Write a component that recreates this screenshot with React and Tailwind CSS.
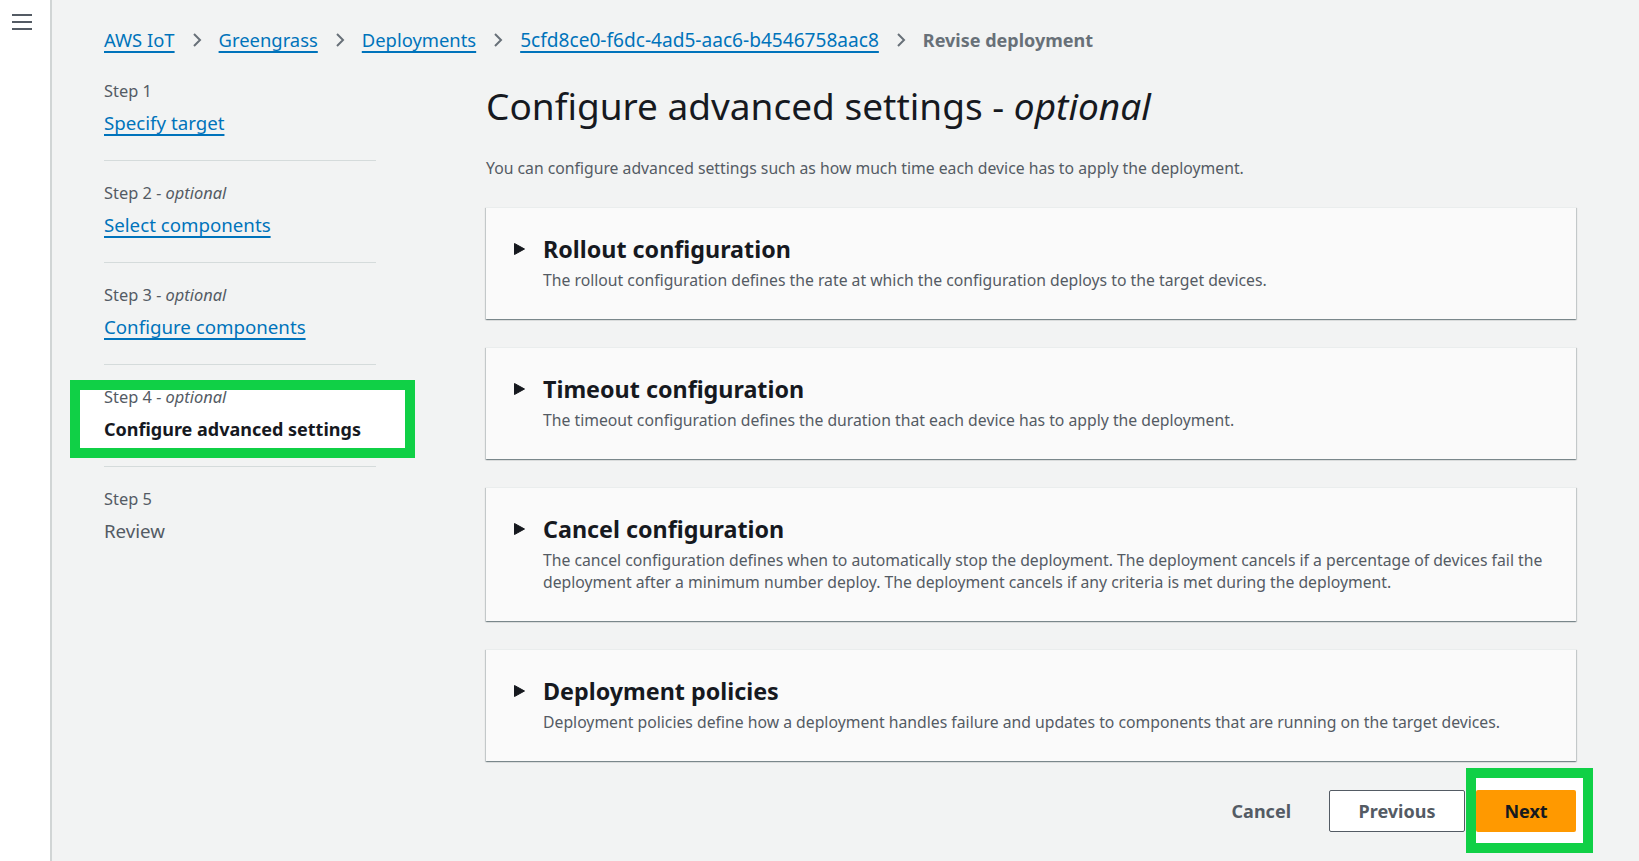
import { useState } from "react";

const crumbs = [
  { label: "AWS IoT", size: "text-[18.4px]" },
  { label: "Greengrass", size: "text-[18.4px]" },
  { label: "Deployments", size: "text-[18.4px]" },
  { label: "5cfd8ce0-f6dc-4ad5-aac6-b4546758aac8", size: "text-[19.1px]" },
];

const steps = [
  { step: "Step 1", optional: false, label: "Specify target", state: "link" },
  { step: "Step 2", optional: true, label: "Select components", state: "link" },
  { step: "Step 3", optional: true, label: "Configure components", state: "link" },
  { step: "Step 4", optional: true, label: "Configure advanced settings", state: "current" },
  { step: "Step 5", optional: false, label: "Review", state: "disabled" },
];

const sections = [
  {
    id: "rollout",
    title: "Rollout configuration",
    desc: "The rollout configuration defines the rate at which the configuration deploys to the target devices.",
  },
  {
    id: "timeout",
    title: "Timeout configuration",
    desc: "The timeout configuration defines the duration that each device has to apply the deployment.",
  },
  {
    id: "cancel",
    title: "Cancel configuration",
    desc: "The cancel configuration defines when to automatically stop the deployment. The deployment cancels if a percentage of devices fail the deployment after a minimum number deploy. The deployment cancels if any criteria is met during the deployment.",
  },
  {
    id: "policies",
    title: "Deployment policies",
    desc: "Deployment policies define how a deployment handles failure and updates to components that are running on the target devices.",
  },
];

const Chevron = () => (
  <svg width="16" height="16" viewBox="0 0 16 16" className="mx-[14px] shrink-0" fill="none">
    <path d="M5 2l6 6-6 6" stroke="#687078" strokeWidth="2" />
  </svg>
);

const Caret = () => (
  <svg width="11" height="12" viewBox="0 0 11 12" className="shrink-0">
    <path d="M0.5 0.5l10 5.5-10 5.5z" fill="#16191f" stroke="#16191f" strokeLinejoin="round" />
  </svg>
);

const App = () => {
  const [open, setOpen] = useState({});

  return (
    <div className="flex h-[861px] overflow-hidden bg-[#f2f3f3] font-['Noto_Sans',sans-serif] text-[#16191f]">
      <div className="w-[52px] shrink-0 bg-white border-r-2 border-[#d1d5d5]">
        <button className="ml-[12px] mt-[14px] flex flex-col gap-[5px]" aria-label="menu">
          <span className="block w-[20px] h-[2px] bg-[#545b64]"></span>
          <span className="block w-[20px] h-[2px] bg-[#545b64]"></span>
          <span className="block w-[20px] h-[2px] bg-[#545b64]"></span>
        </button>
      </div>

      <div className="flex-1 pl-[52px] pr-[63px]">
        <div className="flex items-center pt-[27px] h-[53px] leading-[26px]">
          {crumbs.map((c) => (
            <div key={c.label} className="flex items-center">
              <a className={`${c.size} text-[#0073bb] underline underline-offset-[4px] decoration-[1.5px]`}>{c.label}</a>
              <Chevron />
            </div>
          ))}
          <span className="text-[18px] font-bold text-[#687078]">Revise deployment</span>
        </div>

        <div className="flex">
          <nav className="w-[272px] shrink-0 pt-[28px]">
            {steps.map((s, i) => (
              <div
                key={s.step}
                className={`relative ${i > 0 ? "pt-[22px]" : ""} ${i < steps.length - 1 ? "pb-[25px] border-b border-[#d5dbdb]" : ""}`}
              >
                {s.state === "current" && (
                  <div className="absolute left-[-34px] top-[15px] w-[345px] h-[78px] border-[10px] border-[#10d046] bg-white"></div>
                )}
                <div className="relative text-[16.4px] leading-[20px] text-[#545b64] mb-[10px]">
                  {s.step}
                  {s.optional && <span className="italic"> - optional</span>}
                </div>
                {s.state === "link" && (
                  <a className="relative block text-[18.7px] leading-[24px] text-[#0073bb] underline underline-offset-[4px] decoration-[1.5px]">
                    {s.label}
                  </a>
                )}
                {s.state === "current" && (
                  <div className="relative text-[18px] leading-[24px] font-bold">{s.label}</div>
                )}
                {s.state === "disabled" && (
                  <div className="relative text-[18.7px] leading-[24px] text-[#545b64]">{s.label}</div>
                )}
              </div>
            ))}
          </nav>

          <main className="flex-1 ml-[110px] pt-[31px]">
            <h1 className="text-[37px] leading-[44px] font-normal">
              Configure advanced settings - <span className="italic">optional</span>
            </h1>
            <p className="mt-[30px] text-[15.75px] leading-[20px] text-[#545b64]">
              You can configure advanced settings such as how much time each device has to apply the deployment.
            </p>

            <div className="mt-[29px] flex flex-col gap-[28px]">
              {sections.map((s) => (
                <div
                  key={s.id}
                  className="bg-[#fafafa] border-t border-[#eaeded] shadow-[0_1px_1px_0_rgba(0,28,36,0.3),1px_1px_1px_0_rgba(0,28,36,0.15),-1px_1px_1px_0_rgba(0,28,36,0.15)] px-[28px] pt-[27px] pb-[28px]"
                >
                  <button
                    onClick={() => setOpen({ ...open, [s.id]: !open[s.id] })}
                    className="flex items-center gap-[18px] text-left"
                  >
                    <Caret />
                    <span className="text-[23.3px] leading-[28px] font-bold">{s.title}</span>
                  </button>
                  <p className="mt-[6px] pl-[29px] text-[15.75px] leading-[22px] text-[#545b64]">{s.desc}</p>
                </div>
              ))}
            </div>

            <div className="mt-[29px] flex items-center justify-end">
              <button className="px-[20px] h-[42px] text-[18px] font-bold text-[#545b64]">Cancel</button>
              <button className="ml-[18px] w-[136px] h-[42px] bg-white border border-[#545b64] rounded-[2px] text-[18px] font-bold text-[#545b64]">
                Previous
              </button>
              <div className="relative ml-[11px]">
                <div className="absolute left-[-10px] right-[-17px] top-[-22px] bottom-[-21px] border-[10px] border-[#10d046] bg-white"></div>
                <button className="relative w-[100px] h-[42px] bg-[#ff9900] rounded-[2px] text-[18px] font-bold text-[#16191f]">
                  Next
                </button>
              </div>
            </div>
          </main>
        </div>
      </div>
    </div>
  );
};

export default App;
